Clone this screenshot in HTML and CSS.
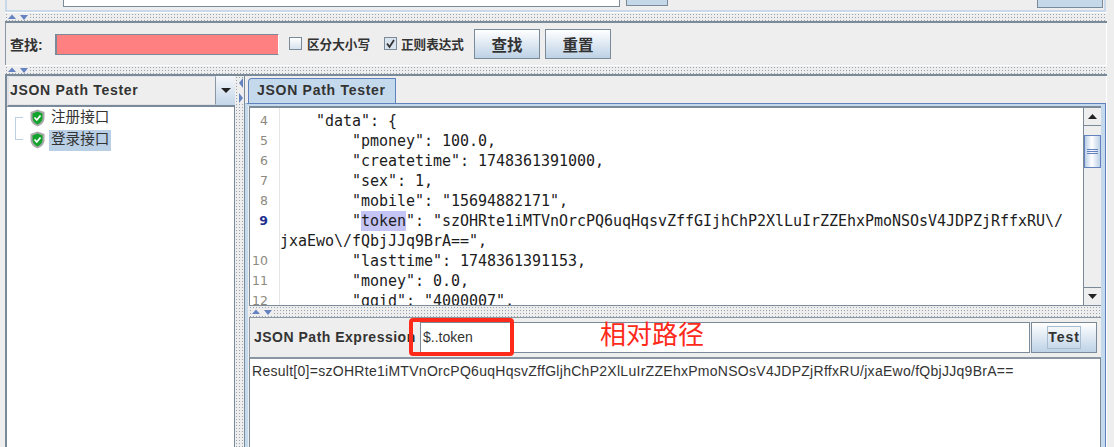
FILE: index.html
```html
<!DOCTYPE html>
<html lang="zh">
<head>
<meta charset="utf-8">
<title>JSON Path Tester</title>
<link rel="stylesheet" href="styles.css">
</head>
<body>
<div class="app">
  <div class="top-strip">
    <div class="top-input"></div>
    <div class="top-btn small"></div>
    <div class="top-btn large"></div>
  </div>
  <div class="divider outer">
    <svg class="arrows" width="22" height="6" viewBox="0 0 22 6"><path d="M0 5 4 0.500 8 5z" fill="#6382bf"/><path d="M12 1h8l-4 5z" fill="#6382bf"/></svg>
  </div>
  <div class="find-panel">
    <span class="find-label">查找:</span>
    <div class="find-input"></div>
    <label class="check"><span class="box"></span>区分大小写</label>
    <label class="check regex"><span class="box checked"><svg width="11" height="11" viewBox="0 0 11 11"><path d="M2 5.500 4.500 9 9 2" fill="none" stroke="#333" stroke-width="1.800"/></svg></span>正则表达式</label>
    <button class="btn">查找</button>
    <button class="btn">重置</button>
  </div>
  <div class="divider outer second">
    <svg class="arrows" width="22" height="6" viewBox="0 0 22 6"><path d="M0 5 4 0.500 8 5z" fill="#6382bf"/><path d="M12 1h8l-4 5z" fill="#6382bf"/></svg>
  </div>
  <div class="main">
    <aside class="left">
      <div class="combo">
        <span class="combo-text">JSON Path Tester</span>
        <span class="combo-arrow"><svg width="10" height="5" viewBox="0 0 10 5"><path d="M0 0h10L5 5z" fill="#222"/></svg></span>
      </div>
      <div class="tree">
        <div class="tree-row">
          <span class="branch first"></span>
          <svg class="shield" width="15" height="18" viewBox="0 0 15 18"><path d="M7.500 .5 14.500 3v6c0 4-3 7-7 8.500C3.500 16 .5 13 .5 9V3z" fill="#a8a8a8"/><path d="M7.500 2.500 12.500 4.500V9c0 3-2 5-5 6.500C4.500 14 2.500 12 2.500 9V4.500z" fill="#12a32c"/><path d="M4.500 8.500 6.800 11 10.500 6.500" fill="none" stroke="#fff" stroke-width="1.800"/></svg>
          <span class="tree-label">注册接口</span>
        </div>
        <div class="tree-row">
          <span class="branch"></span>
          <svg class="shield" width="15" height="18" viewBox="0 0 15 18"><path d="M7.500 .5 14.500 3v6c0 4-3 7-7 8.500C3.500 16 .5 13 .5 9V3z" fill="#a8a8a8"/><path d="M7.500 2.500 12.500 4.500V9c0 3-2 5-5 6.500C4.500 14 2.500 12 2.500 9V4.500z" fill="#12a32c"/><path d="M4.500 8.500 6.800 11 10.500 6.500" fill="none" stroke="#fff" stroke-width="1.800"/></svg>
          <span class="tree-label selected">登录接口</span>
        </div>
      </div>
    </aside>
    <div class="split">
      <svg width="5" height="26" viewBox="0 0 5 26"><path d="M4 0v10L0 5z" fill="#6382bf"/><path d="M0 15v10l4-5z" fill="#6382bf"/></svg>
    </div>
    <section class="right">
      <div class="tabs"><div class="tab">JSON Path Tester</div></div>
      <div class="tab-body">
        <div class="editor">
          <div class="code">
            <div class="line"><span class="num">4</span><pre>    "data": {</pre></div>
            <div class="line"><span class="num">5</span><pre>        "pmoney": 100.0,</pre></div>
            <div class="line"><span class="num">6</span><pre>        "createtime": 1748361391000,</pre></div>
            <div class="line"><span class="num">7</span><pre>        "sex": 1,</pre></div>
            <div class="line"><span class="num">8</span><pre>        "mobile": "15694882171",</pre></div>
            <div class="line"><span class="num active">9</span><pre>        "<mark>token</mark>": "szOHRte1iMTVnOrcPQ6uqHqsvZffGIjhChP2XlLuIrZZEhxPmoNSOsV4JDPZjRffxRU\/</pre></div>
            <div class="line"><span class="num"></span><pre>jxaEwo\/fQbjJJq9BrA==",</pre></div>
            <div class="line"><span class="num">10</span><pre>        "lasttime": 1748361391153,</pre></div>
            <div class="line"><span class="num">11</span><pre>        "money": 0.0,</pre></div>
            <div class="line"><span class="num">12</span><pre>        "ggid": "4000007",</pre></div>
          </div>
          <div class="scrollbar">
            <div class="sb-btn"><svg width="9" height="5" viewBox="0 0 9 5"><path d="M4.500 0 9 5H0z" fill="#222"/></svg></div>
            <div class="sb-track short"></div>
            <div class="sb-thumb"><i></i><i></i><i></i></div>
            <div class="sb-track"></div>
            <div class="sb-btn end"><svg width="9" height="5" viewBox="0 0 9 5"><path d="M0 0h9L4.500 5z" fill="#222"/></svg></div>
          </div>
        </div>
        <div class="divider inner">
          <svg class="arrows" width="22" height="6" viewBox="0 0 22 6"><path d="M0 5 4 0.500 8 5z" fill="#6382bf"/><path d="M12 1h8l-4 5z" fill="#6382bf"/></svg>
        </div>
        <div class="expr-row">
          <span class="expr-label">JSON Path Expression</span>
          <div class="expr-input">$..token</div>
          <button class="test-btn"><span>Test</span></button>
        </div>
        <div class="result">Result[0]=szOHRte1iMTVnOrcPQ6uqHqsvZffGljhChP2XlLuIrZZEhxPmoNSOsV4JDPZjRffxRU/jxaEwo/fQbjJJq9BrA==</div>
      </div>
    </section>
  </div>
  <div class="red-box"></div>
  <div class="note">相对路径</div>
</div>
</body>
</html>
```
FILE: styles.css
```css
* { box-sizing: border-box; }
html, body { margin: 0; padding: 0; }
body { width: 1114px; height: 447px; overflow: hidden; background: #eeeeee; }
.app { position: relative; width: 1114px; height: 447px; font-family: "Liberation Sans", "Noto Sans CJK SC", sans-serif; color: #333; }

.top-strip { height: 12px; display: flex; margin-left: 5px; margin-right: 8px; padding-left: 56px; border-left: 2px solid #c8d9ea; border-right: 2px solid #c8d9ea; border-bottom: 2px solid #c8d9ea; }
.top-input { width: 557px; height: 7px; background: #fff; border: 1px solid #7a8a99; border-top: 0; }
.top-btn { background: #c5d8ea; border: 1px solid #7a8a99; border-top: 0; }
.top-btn.small { width: 42px; height: 6px; margin-left: 6px; margin-right: 369px; }
.top-btn.large { width: 66px; height: 8px; }

.divider { display: flex; align-items: center; background-image: radial-gradient(#9aa4ad 0.7px, transparent 0.8px); background-size: 3px 3px; background-color: #eeeeee; }
.divider.outer { height: 11px; margin-left: 5px; margin-right: 7px; border-top: 1px solid #fff; border-bottom: 2px solid #7a8a99; }
.divider.second { height: 11px; }
.arrows { flex: none; margin-left: 3px; background: #eee; }

.find-panel { height: 42px; margin-left: 5px; margin-right: 7px; display: flex; align-items: center; padding-left: 4px; border-left: 1px solid #8a97a3; border-right: 1px solid #fff; }
.find-label { width: 45px; flex: none; font-size: 14px; font-weight: 700; color: #333; }
.find-input { width: 224px; height: 21px; flex: none; background: #ff8080; border-style: solid; border-width: 1px 1px 1px 2px; border-color: #7a8a99 #fff #7a8a99 #7a8a99; }
.check { display: flex; align-items: center; height: 20px; margin-top: -1px; font-size: 12.600px; font-weight: 700; color: #333; gap: 5px; margin-left: 10px; white-space: nowrap; }
.check.regex { margin-left: 14px; gap: 4px; margin-right: 10px; }
.box { width: 13px; height: 13px; flex: none; border: 1px solid #7a8a99; background: linear-gradient(#fff, #d6e2ee); display: flex; align-items: center; justify-content: center; }
.box.checked { background: #d9e4ef; }
.btn { width: 66px; height: 30px; flex: none; margin-right: 5px; padding: 0; border: 1px solid #7a8a99; background: linear-gradient(#ffffff, #e8eff6 35%, #bdd2e6); font: 700 15.500px "Liberation Sans", "Noto Sans CJK SC", sans-serif; color: #333; }

.main { display: flex; height: 371px; margin-left: 5px; margin-right: 7px; border-right: 1px solid #fff; }
.left { width: 230px; flex: none; display: flex; flex-direction: column; border-left: 2px solid #7a8a99; }
.combo { height: 31px; flex: none; display: flex; border-bottom: 2px solid #7a8a99; border-left: 1px solid #dfe3e7; background: #eeeeee; box-shadow: inset 0 1px 0 #fff; }
.combo-text { flex: 1; padding: 5px 0 0 1px; font-size: 14px; font-weight: 700; letter-spacing: .7px; border: 1px solid #dfe3e7; border-right: 1px solid #8a97a3; white-space: nowrap; }
.combo-arrow { width: 19px; flex: none; display: flex; align-items: center; justify-content: center; background: linear-gradient(#f5f7fa, #c3d6e8); }
.tree { flex: 1; background: #fff; padding-left: 8px; border-right: 1px solid #7a8a99; }
.tree-row { height: 22px; display: flex; align-items: center; }
.branch { width: 8px; height: 11px; flex: none; align-self: flex-start; margin-right: 7px; border-left: 1px solid #bcd0e4; border-bottom: 1px solid #bcd0e4; }
.branch.first { height: 12px; margin-top: 10px; border-bottom: 0; border-top: 1px solid #bcd0e4; }
.shield { flex: none; margin-right: 4px; }
.tree-label { font-size: 14.600px; padding: 0 2px; height: 21px; line-height: 18px; color: #333; white-space: nowrap; }
.tree-label.selected { background: #b8cfe5; }

.split { width: 10px; flex: none; padding: 2px 0 0 4px; border-right: 1px solid #7a8a99; background-image: radial-gradient(#9aa4ad 0.7px, transparent 0.8px); background-size: 3px 3px; }
.split svg { display: block; background: #eee; }

.right { flex: 1; min-width: 0; display: flex; flex-direction: column; }
.tabs { height: 27px; flex: none; display: flex; padding-left: 3px; align-items: flex-end; }
.tab { width: 148px; height: 25px; padding: 3px 0 0 8px; background: #c5d9ec; border: 1px solid #5f82bd; border-bottom: 0; border-radius: 4px 0 0 0; font-size: 14px; font-weight: 700; letter-spacing: .72px; white-space: nowrap; }
.tab-body { flex: 1; min-height: 0; display: flex; flex-direction: column; padding: 2px 4px 0 0; border-top: 1px solid #5f82bd; border-right: 1px solid #5f82bd; border-left: 3px solid #c5d9ec; background: #eee; box-shadow: inset 0 2px 0 #c5d9ec, inset -4px 0 0 #c5d9ec; }
.editor { height: 200px; flex: none; display: flex; margin-left: 1px; background: #fff; border-top: 2px solid #7a8a99; border-left: 1px solid #7a8a99; border-bottom: 1px solid #7a8a99; overflow: hidden; }
.code { flex: 1; min-width: 0; padding-top: 3px; background: linear-gradient(90deg, #fff 29px, #e6e6e6 29px, #e6e6e6 30px, #fff 30px); overflow: hidden; }
.line { height: 20px; display: flex; }
.num { width: 30px; flex: none; padding-right: 12px; text-align: right; font: 12.500px/20px "DejaVu Sans", sans-serif; color: #8c8a80; }
.num.active { color: #1f2f8f; font-weight: 700; }
.line pre { margin: 0; font: 15px/20px "DejaVu Sans Mono", monospace; letter-spacing: -.03px; color: #1c1c1c; }
mark { display: inline-block; height: 20px; background: #c5c5f5; color: inherit; }
.scrollbar { width: 18px; flex: none; display: flex; flex-direction: column; border-left: 1px solid #7a8a99; background: #eee; }
.sb-btn { height: 18px; flex: none; display: flex; align-items: center; justify-content: center; border-bottom: 1px solid #7a8a99; }
.sb-btn.end { border-bottom: 0; border-top: 1px solid #7a8a99; height: 18px; }
.sb-track { flex: 1; }
.sb-track.short { flex: none; height: 9px; }
.sb-thumb { height: 33px; flex: none; display: flex; flex-direction: column; align-items: center; justify-content: center; gap: 1px; background: linear-gradient(90deg, #b9cee6, #fff 45%, #bcd0e6); border: 1px solid #6382bf; }
.sb-thumb i { display: block; width: 11px; height: 1px; background: #6382bf; }

.divider.inner { height: 12px; flex: none; margin-left: 1px; border-bottom: 1px solid #8a97a3; }
.expr-row { height: 39px; flex: none; display: flex; align-items: flex-start; margin-left: 1px; padding-top: 4px; border-left: 1px solid #8a97a3; }
.expr-label { width: 170px; flex: none; padding-left: 4px; line-height: 31px; font-size: 14px; font-weight: 700; letter-spacing: .5px; white-space: nowrap; }
.expr-input { width: 610px; height: 31px; flex: none; padding: 6px 0 0 2px; background: #fff; border: 1px solid #7a8a99; font-size: 14px; color: #333; }
.test-btn { width: 66px; height: 31px; flex: none; margin-left: 1px; padding: 0; border: 1px solid #7a8a99; background: linear-gradient(#ffffff, #e8eff6 35%, #bdd2e6); font: 700 14px "Liberation Sans", sans-serif; letter-spacing: 1px; color: #333; }
.test-btn span { display: inline-block; width: 34px; height: 23px; line-height: 21px; border: 1px solid #a9bdd0; }
.result { flex: 1; background: #fff; margin-left: 1px; padding: 4px 0 0 2px; font-size: 14px; color: #333; border-top: 2px solid #8a97a3; border-left: 1px solid #7a8a99; border-right: 1px solid #7a8a99; white-space: nowrap; letter-spacing: .28px; }

.red-box { position: absolute; left: 409px; top: 318px; width: 105px; height: 38px; border: 4px solid #ff2a1a; border-radius: 4px; }
.note { position: absolute; left: 600px; top: 318px; font: 26px/30px "Noto Sans CJK SC", sans-serif; color: #ff2a1a; }
```
